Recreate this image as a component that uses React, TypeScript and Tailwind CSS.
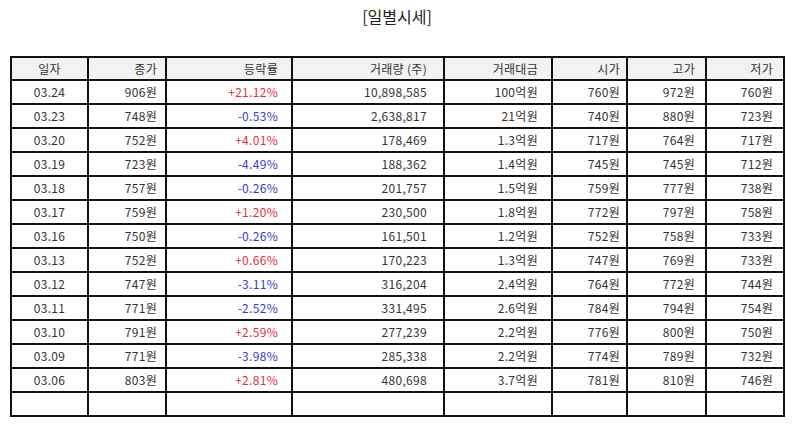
const rows: [string, string, string, string, string, string, string, string][] = [
  ["03.24", "906원", "+21.12%", "10,898,585", "100억원", "760원", "972원", "760원"],
  ["03.23", "748원", "-0.53%", "2,638,817", "21억원", "740원", "880원", "723원"],
  ["03.20", "752원", "+4.01%", "178,469", "1.3억원", "717원", "764원", "717원"],
  ["03.19", "723원", "-4.49%", "188,362", "1.4억원", "745원", "745원", "712원"],
  ["03.18", "757원", "-0.26%", "201,757", "1.5억원", "759원", "777원", "738원"],
  ["03.17", "759원", "+1.20%", "230,500", "1.8억원", "772원", "797원", "758원"],
  ["03.16", "750원", "-0.26%", "161,501", "1.2억원", "752원", "758원", "733원"],
  ["03.13", "752원", "+0.66%", "170,223", "1.3억원", "747원", "769원", "733원"],
  ["03.12", "747원", "-3.11%", "316,204", "2.4억원", "764원", "772원", "744원"],
  ["03.11", "771원", "-2.52%", "331,495", "2.6억원", "784원", "794원", "754원"],
  ["03.10", "791원", "+2.59%", "277,239", "2.2억원", "776원", "800원", "750원"],
  ["03.09", "771원", "-3.98%", "285,338", "2.2억원", "774원", "789원", "732원"],
  ["03.06", "803원", "+2.81%", "480,698", "3.7억원", "781원", "810원", "746원"],
];

const headers = ["일자", "종가", "등락률", "거래량 (주)", "거래대금", "시가", "고가", "저가"];

// column widths, read off the reference
const widths = ["w-[77px]", "w-[78px]", "w-[126px]", "w-[152px]", "w-[108px]", "w-[75px]", "w-[79px]", "w-[78px]"];

// alignment and right padding per column
const cols = [
  "text-center",
  "text-right pr-[8px]",
  "text-right pr-[13px]",
  "text-right pr-[16px]",
  "text-right pr-[13px]",
  "text-right pr-[6px]",
  "text-right pr-[10px]",
  "text-right pr-[10px]",
];

export default function App() {
  return (
    <div
      className="w-[794px] h-[425px] bg-white text-[#333]"
      style={{ fontFamily: '"Noto Sans CJK KR", "Noto Sans", sans-serif' }}
    >
      <h1 className="pt-[4px] h-[56px] text-center text-[16px] leading-[24px] text-[#222]">[일별시세]</h1>
      <table className="ml-[10px] w-[773px] border-collapse table-fixed text-[12px] tracking-[0.3px]">
        <colgroup>
          {widths.map((w, i) => (
            <col key={i} className={w} />
          ))}
        </colgroup>
        <thead>
          <tr className="h-[23px] bg-[#f2f2f2]">
            {headers.map((h, i) => (
              <th key={h} className={`${cols[i]} border-2 border-[#111] font-normal py-0 leading-[18px]`}>
                {h}
              </th>
            ))}
          </tr>
        </thead>
        <tbody>
          {rows.map((r) => (
            <tr key={r[0]} className="h-[24px]">
              {r.map((c, i) => (
                <td
                  key={i}
                  className={`${cols[i]} border-2 border-[#111] py-0 leading-[18px] ${
                    i === 2 ? (c.startsWith("+") ? "text-[#e0303a]" : "text-[#3a3acc]") : ""
                  }`}
                >
                  {c}
                </td>
              ))}
            </tr>
          ))}
          <tr className="h-[24px]">
            {headers.map((h) => (
              <td key={h} className="border-2 border-[#111]" />
            ))}
          </tr>
        </tbody>
      </table>
    </div>
  );
}
